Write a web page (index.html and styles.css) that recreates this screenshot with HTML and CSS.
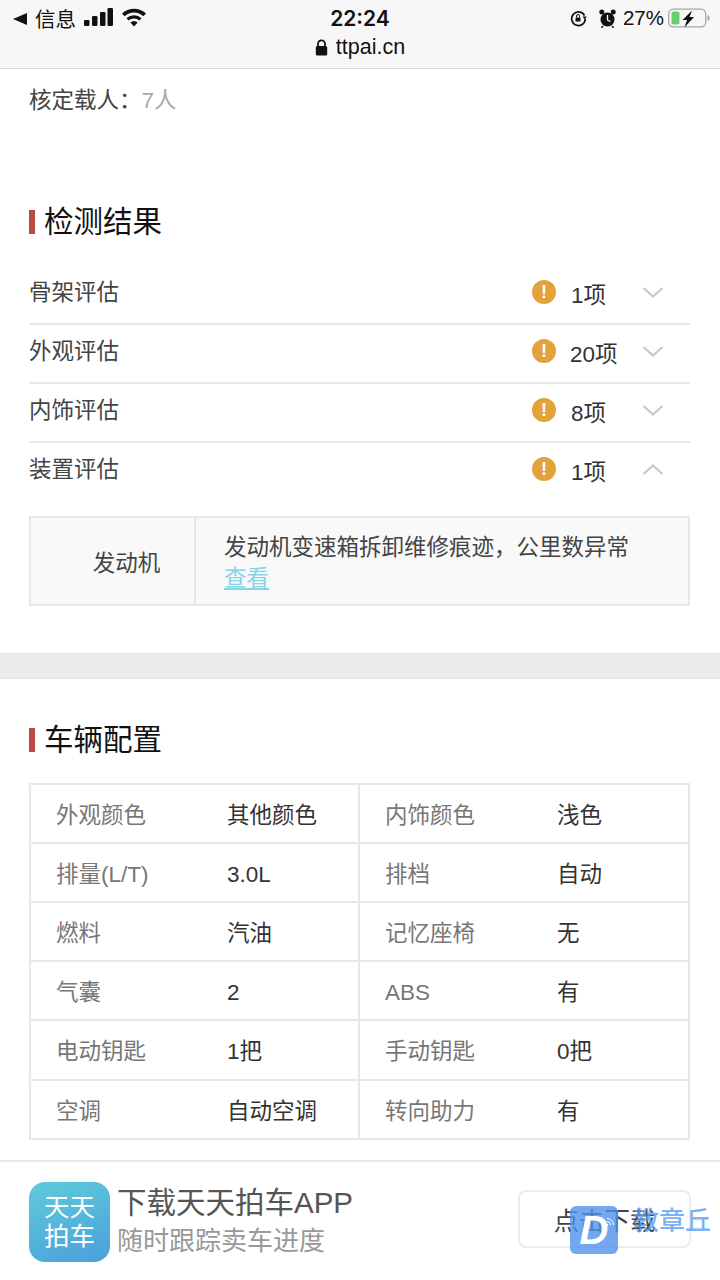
FILE: index.html
```html
<!DOCTYPE html>
<html lang="zh-CN">
<head>
<meta charset="utf-8">
<title>ttpai.cn</title>
<link rel="stylesheet" href="styles.css">
</head>
<body>
<div class="page">
  <header class="browser">
    <div class="status">
      <div class="status-left">
        <svg class="back" width="14" height="14" viewBox="0 0 14 14"><path d="M14 1v12L0 7z" fill="#111"/></svg>
        <span class="carrier">信息</span>
        <svg class="signal" width="29" height="18" viewBox="0 0 29 18"><rect x="0" y="12" width="5.500" height="6" rx="1.200"/><rect x="8" y="8" width="5.500" height="10" rx="1.200"/><rect x="16" y="4" width="5.500" height="14" rx="1.200"/><rect x="23.500" y="0" width="5.500" height="18" rx="1.200"/></svg>
        <svg class="wifi" width="26" height="19" viewBox="0 0 26 19"><path d="M13 18.500l-3.600-4a5 5 0 0 1 7.200 0zM7.600 12.600L5.400 10.200a11 11 0 0 1 15.200 0l-2.200 2.400a8 8 0 0 0-10.800 0zM3.600 8.300L1 5.600a17 17 0 0 1 24 0l-2.600 2.700a13.500 13.500 0 0 0-18.800 0z" fill="#111"/></svg>
      </div>
      <div class="clock">22:24</div>
      <div class="status-right">
        <svg width="17" height="17" viewBox="0 0 17 17"><path d="M14.500 5.500A6.800 6.800 0 1 0 15.300 9" fill="none" stroke="#111" stroke-width="1.700"/><path d="M12.500 6.500h4.300l-2.100 3z" fill="#111"/><rect x="5.500" y="7.500" width="5" height="4" rx=".6" fill="#111"/><path d="M6.500 7.500V6a1.500 1.500 0 0 1 3 0v1.500" fill="none" stroke="#111" stroke-width="1"/></svg>
        <svg class="alarm" width="17" height="19" viewBox="0 0 17 19"><circle cx="8.500" cy="10.500" r="7" fill="#111"/><path d="M8.500 6v5l3 1.500" fill="none" stroke="#f7f7f7" stroke-width="1.300"/><circle cx="2.800" cy="3" r="2.500" fill="#111"/><circle cx="14.200" cy="3" r="2.500" fill="#111"/><path d="M4 17l-1.500 1.800M13 17l1.500 1.800" stroke="#111" stroke-width="1.500"/></svg>
        <span class="percent">27%</span>
        <svg class="battery" width="42" height="20" viewBox="0 0 42 20"><rect x=".7" y="1.200" width="37" height="17.600" rx="4.500" fill="none" stroke="#a6a6a6" stroke-width="1.300"/><rect x="3.500" y="3.500" width="8" height="13" rx="2" fill="#62d06f"/><path d="M39.500 7c1.500.4 2.200 1.600 2.200 3s-.7 2.600-2.200 3z" fill="#a6a6a6"/><path d="M24 2.500l-9.500 9.500h4.500l-2.500 7.500 9.500-10.500h-4.500z" fill="#111"/></svg>
      </div>
    </div>
    <div class="address">
      <svg width="13" height="17" viewBox="0 0 13 17"><path d="M3 8V4.800a3.500 3.500 0 0 1 7 0V8" fill="none" stroke="#111" stroke-width="1.800"/><rect x=".8" y="7" width="11.400" height="9.500" rx="1.500" fill="#111"/></svg>
      <span>ttpai.cn</span>
    </div>
  </header>

  <section class="panel first">
    <p class="seat">核定载人：<span class="seat-value">7人</span></p>

    <h2 class="heading heading-check">检测结果</h2>
    <div class="check-row">
      <span class="check-name">骨架评估</span>
      <span class="warn">!</span><span class="count">1项</span>
      <svg class="chev" width="22" height="13" viewBox="0 0 22 13"><path d="M1.500 2L11 10.500 20.500 2" fill="none" stroke="#c8c8c8" stroke-width="2.200"/></svg>
    </div>
    <div class="check-row">
      <span class="check-name">外观评估</span>
      <span class="warn">!</span><span class="count count-wide">20项</span>
      <svg class="chev" width="22" height="13" viewBox="0 0 22 13"><path d="M1.500 2L11 10.500 20.500 2" fill="none" stroke="#c8c8c8" stroke-width="2.200"/></svg>
    </div>
    <div class="check-row">
      <span class="check-name">内饰评估</span>
      <span class="warn">!</span><span class="count">8项</span>
      <svg class="chev" width="22" height="13" viewBox="0 0 22 13"><path d="M1.500 2L11 10.500 20.500 2" fill="none" stroke="#c8c8c8" stroke-width="2.200"/></svg>
    </div>
    <div class="check-row open">
      <span class="check-name">装置评估</span>
      <span class="warn">!</span><span class="count">1项</span>
      <svg class="chev" width="22" height="13" viewBox="0 0 22 13"><path d="M1.500 11L11 2.500 20.500 11" fill="none" stroke="#c8c8c8" stroke-width="2.200"/></svg>
    </div>

    <div class="detail">
      <div class="detail-name">发动机</div>
      <div class="detail-text">发动机变速箱拆卸维修痕迹，公里数异常<br><a class="detail-link">查看</a></div>
    </div>
  </section>

  <div class="band"></div>

  <section class="panel">
    <h2 class="heading heading-config">车辆配置</h2>
    <div class="config">
      <div class="config-row"><span class="key">外观颜色</span><span class="val">其他颜色</span><span class="key split">内饰颜色</span><span class="val">浅色</span></div>
      <div class="config-row"><span class="key">排量(L/T)</span><span class="val">3.0L</span><span class="key split">排档</span><span class="val">自动</span></div>
      <div class="config-row"><span class="key">燃料</span><span class="val">汽油</span><span class="key split">记忆座椅</span><span class="val">无</span></div>
      <div class="config-row"><span class="key">气囊</span><span class="val">2</span><span class="key split">ABS</span><span class="val">有</span></div>
      <div class="config-row"><span class="key">电动钥匙</span><span class="val">1把</span><span class="key split">手动钥匙</span><span class="val">0把</span></div>
      <div class="config-row"><span class="key">空调</span><span class="val">自动空调</span><span class="key split">转向助力</span><span class="val">有</span></div>
    </div>
  </section>

  <footer class="download">
    <div class="app-icon"><span>天天</span><span>拍车</span></div>
    <div class="app-copy">
      <div class="app-title">下载天天拍车APP</div>
      <div class="app-sub">随时跟踪卖车进度</div>
    </div>
    <div class="app-btn">点击下载</div>
  </footer>

  <div class="watermark">
    <div class="wm-badge">
      <span class="wm-d">D</span>
      <svg class="wm-waves" width="10" height="10" viewBox="0 0 10 10"><circle cx="2" cy="8" r="1.300" fill="#fff"/><path d="M2 4.500a3.500 3.500 0 0 1 3.500 3.500M2 1.500A6.500 6.500 0 0 1 8.500 8" fill="none" stroke="#fff" stroke-width="1"/></svg>
    </div>
    <span class="wm-text">教章丘</span>
  </div>
</div>
</body>
</html>
```

FILE: styles.css
```css
* { box-sizing: border-box; }
html, body { margin: 0; padding: 0; background: #fff; }
body { font-family: "Liberation Sans", "Noto Sans CJK SC", sans-serif; color: #333; }
.page { position: relative; width: 720px; height: 1280px; overflow: hidden; background: #fff; }

.browser { height: 69px; background: #f7f7f7; border-bottom: 1px solid #d9d9d9; color: #111; }
.status { position: relative; display: flex; justify-content: space-between; align-items: center; height: 35px; padding: 1px 10px 0 13px; }
.status-left, .status-right { display: flex; align-items: center; }
.back { margin-right: 8px; margin-top: 1px; }
.carrier { font-size: 20.500px; margin-right: 8px; }
.signal { fill: #111; margin-right: 8px; margin-top: -2px; }
.wifi { margin-top: -2px; }
.clock { position: absolute; left: 0; right: 0; text-align: center; font-family: Inter, "Liberation Sans", sans-serif; font-size: 21px; font-weight: 600; pointer-events: none; }
.status-right svg { flex: none; }
.alarm { margin-left: 12px; }
.percent { font-size: 20.500px; margin: 0 4px 0 7px; }
.address { display: flex; justify-content: center; align-items: center; gap: 8px; height: 25px; font-size: 21.500px; }

.panel { padding: 0 30px; }
.seat { margin: 0; padding-top: 16px; height: 62px; font-size: 22.500px; line-height: 32px; color: #444; margin-left: -1px; }
.seat-value { color: #aaa; }

.heading { display: flex; align-items: center; margin: 0 0 0 -1px; font-size: 29.500px; line-height: 40px; font-weight: 400; color: #111; }
.heading::before { content: ""; width: 6px; height: 24px; margin-right: 9px; background: #bb4a45; }
.heading-check { margin-top: 71px; margin-bottom: 24px; }
.heading-config { padding-top: 41px; margin-bottom: 23px; }

.check-row { display: flex; align-items: center; height: 59px; border-bottom: 2px solid #e8e8e8; width: 661px; padding-bottom: 9px; font-size: 22.500px; color: #444; margin-left: -1px; }
.check-row.open { border-bottom: 0; height: 73px; padding-bottom: 25px; }
.check-name { flex: 1; }
.warn { display: flex; align-items: center; justify-content: center; width: 24px; height: 24px; border-radius: 50%; background: #e3a33b; color: #fff; font-size: 18px; font-weight: 700; margin-top: 4px; }
.count { width: 74px; padding-left: 15px; color: #333; margin-top: 5px; white-space: nowrap; margin-right: 12px; }
.count-wide { padding-left: 14px; }
.chev { margin-right: 26px; margin-top: 5px; }

.detail { display: flex; width: 661px; height: 90px; margin-left: -1px; border: 2px solid #e8e8e8; background: #f9f9f9; font-size: 22.500px; color: #444; }
.detail-name { display: flex; align-items: center; justify-content: center; width: 165px; padding-left: 28px; border-right: 2px solid #e8e8e8; }
.detail-text { flex: 1; padding: 14px 0 0 28px; line-height: 31px; }
.detail-link { color: #86d3e6; text-decoration: underline; }

.band { height: 26px; margin-top: 47px; background: #ebebeb; border-top: 1px solid #e0e0e0; border-bottom: 1px solid #e0e0e0; }

.config { width: 661px; margin-left: -1px; border: 2px solid #e8e8e8; border-bottom-width: 0; font-size: 22.500px; line-height: 32px; }
.config-row { display: grid; grid-template-columns: 171px 156px 174px 1fr; align-items: center; height: 59px; border-bottom: 2px solid #e8e8e8; }
.config-row:nth-child(5) { height: 60px; }
.key { padding: 4px 0 0 25px; color: #777; white-space: nowrap; }
.key.split { height: 100%; display: flex; align-items: center; border-left: 2px solid #e8e8e8; padding-top: 4px; }
.val { padding: 4px 0 0 25px; color: #333; white-space: nowrap; }

.download { position: absolute; left: 0; right: 0; bottom: 0; height: 120px; display: flex; align-items: center; padding: 0 29px 2px; border-top: 2px solid #e8e8e8; background: #fff; }
.app-icon { display: flex; flex-direction: column; align-items: center; justify-content: center; width: 81px; height: 80px; border-radius: 16px; background: linear-gradient(160deg, #5fcbdc, #4aa0db); color: #fff; font-size: 25.500px; line-height: 29px; margin-top: 3px; }
.app-copy { margin-left: 7px; flex: 1; }
.app-title { font-size: 29.500px; line-height: 38px; color: #555; margin-top: 2px; }
.app-sub { font-size: 26px; line-height: 36px; color: #999; margin-top: 1px; }
.app-btn { width: 173px; height: 58px; margin-top: -3px; border: 2px solid #ececec; border-radius: 8px; display: flex; align-items: center; justify-content: center; font-size: 25.500px; color: #444; }

.watermark { position: absolute; left: 570px; top: 1206px; display: flex; align-items: flex-start; }
.wm-badge { position: relative; width: 48px; height: 48px; border-radius: 6px; background: rgba(80, 145, 235, .8); display: flex; justify-content: center; align-items: center; }
.wm-d { font-size: 40px; font-weight: 700; font-style: italic; color: #fff; line-height: 1; }
.wm-waves { position: absolute; right: 3px; top: 11px; }
.wm-text { margin: 0 0 0 15px; font-size: 26px; line-height: 30px; color: rgba(90, 155, 240, .8); font-weight: 500; white-space: nowrap; }
```
